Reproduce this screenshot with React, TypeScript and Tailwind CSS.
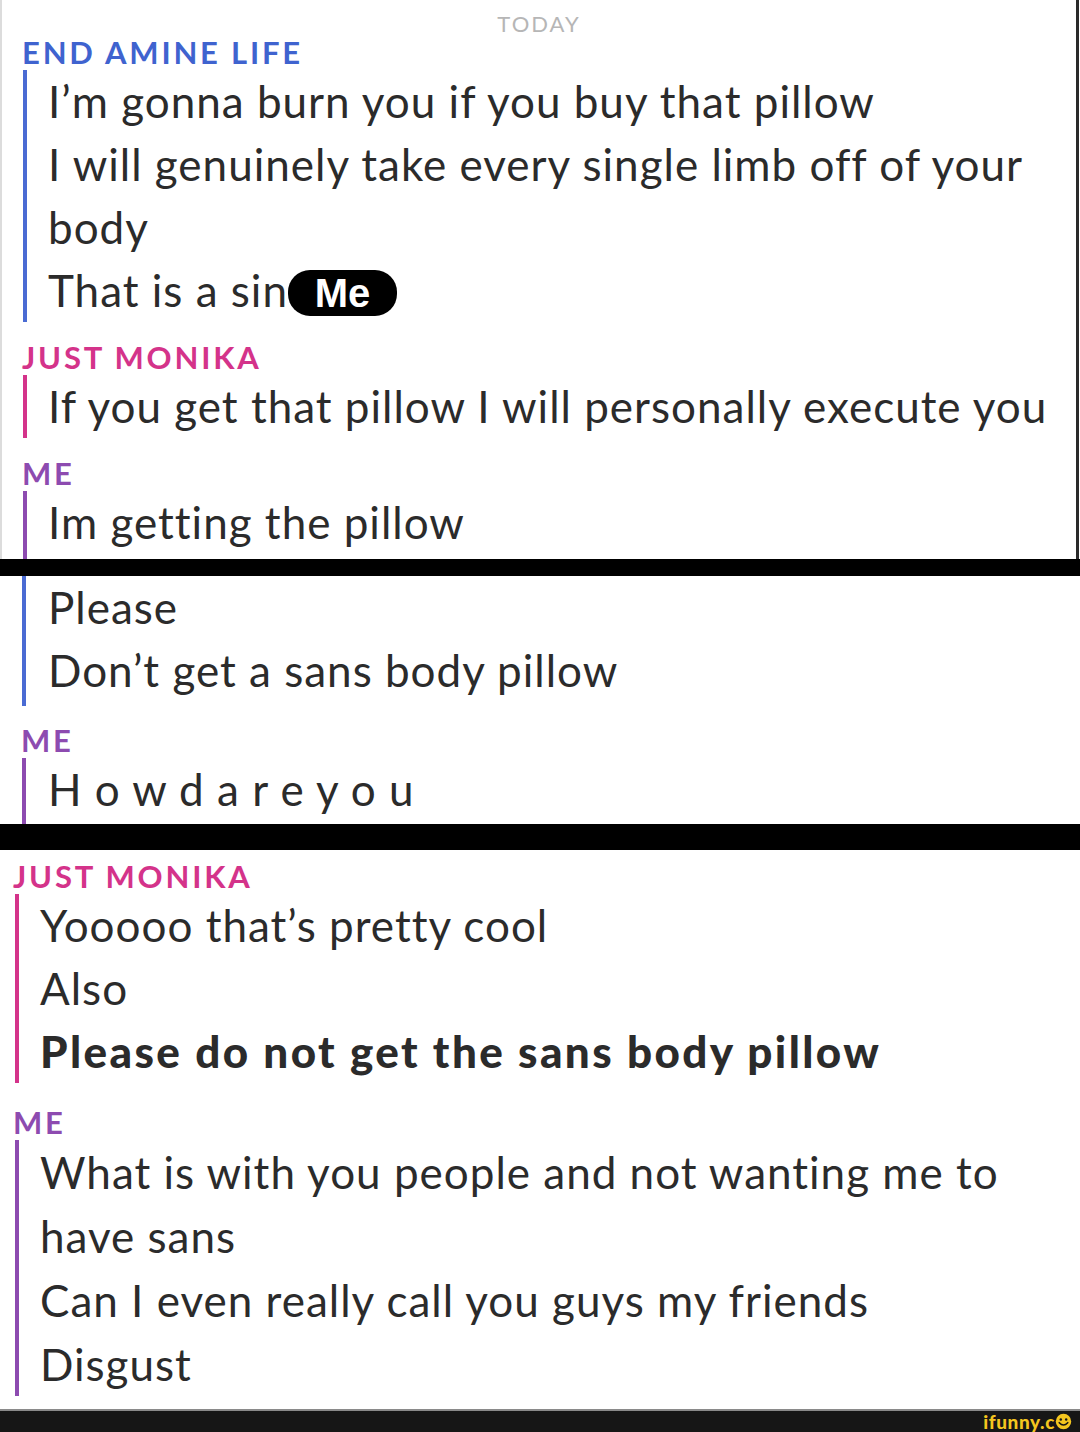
const font = { fontFamily: "Lato, 'Noto Sans', sans-serif" };

function Label({ color, children, className = "" }: { color: string; children: React.ReactNode; className?: string }) {
  return (
    <div className={`h-[32px] leading-[32px] text-[31px] font-bold tracking-[2.8px] ${color} ${className}`}>
      {children}
    </div>
  );
}

function Lines({ lines, bar, className = "", lh = "leading-[63px]" }: { lines: React.ReactNode[]; bar: string; className?: string; lh?: string }) {
  return (
    <div className={`border-l-[4px] ${bar} ${className}`}>
      {lines.map((l, i) => (
        <div key={i} className={`${lh} text-[44px] tracking-[1px] text-[#2b2b2b] whitespace-nowrap`}>
          {l}
        </div>
      ))}
    </div>
  );
}

function MeBadge() {
  return (
    <span
      className="inline-flex items-center justify-center align-middle h-[46px] w-[109px] -mt-[6px] rounded-[22px] bg-black text-white text-[40px] font-black tracking-[0px] leading-none"
      style={{ fontFamily: "'Liberation Sans', Arial, sans-serif" }}
    >
      Me
    </span>
  );
}

function IfunnyLogo() {
  return (
    <div className="flex items-center h-full pr-[8px] text-[#f4c61f] font-black text-[19px] leading-[20px] tracking-[0.6px]" style={font}>
      <span>ifunny.c</span>
      <svg width="17" height="17" viewBox="0 0 22 22">
        <circle cx="11" cy="11" r="10" fill="#f4c61f" />
        <circle cx="7.5" cy="8.5" r="1.6" fill="#161616" />
        <circle cx="14.5" cy="8.5" r="1.6" fill="#161616" />
        <path d="M5.5 12.5 Q11 18.5 16.5 12.5" stroke="#161616" strokeWidth="2" fill="none" strokeLinecap="round" />
      </svg>
    </div>
  );
}

export default function App() {
  const blue = "border-[#4a6bd3]";
  const pink = "border-[#d4338a]";
  const purple = "border-[#8d4bb0]";

  return (
    <main className="w-[1080px] h-[1432px] bg-white overflow-hidden flex flex-col" style={font}>
      {/* first screenshot */}
      <section className="h-[559px] flex flex-col pl-[20px] border-l-[2px] border-l-[#dcdcdc] border-r-[3px] border-r-[#2a2a2a] w-[1079px]">
        <div className="h-[36px] pt-[10px] leading-[28px] text-center text-[22px] tracking-[2px] text-[#b6b6b6] pr-[20px]">
          TODAY
        </div>
        <Label color="text-[#3f63cf]">END AMINE LIFE</Label>
        <Lines
          bar={blue}
          className="mt-[2px] ml-[1px] pl-[21px]"
          lines={[
            "I’m gonna burn you if you buy that pillow",
            "I will genuinely take every single limb off of your",
            "body",
            <span>
              That is a sin
              <MeBadge />
            </span>,
          ]}
        />
        <Label color="text-[#d4338a]" className="mt-[19px]">JUST MONIKA</Label>
        <Lines bar={pink} className="mt-[2px] ml-[1px] pl-[21px]" lines={["If you get that pillow I will personally execute you"]} />
        <Label color="text-[#8d4bb0]" className="mt-[19px]">ME</Label>
        <Lines bar={purple} className="mt-[2px] ml-[1px] pl-[21px] flex-1" lines={["Im getting the pillow"]} />
      </section>

      <div className="h-[17px] bg-black" />

      {/* second screenshot */}
      <section className="h-[248px] flex flex-col pl-[22px]">
        <Lines bar={blue} className="pl-[22px] pb-[4px]" lines={["Please", "Don’t get a sans body pillow"]} />
        <Label color="text-[#8d4bb0]" className="mt-[18px] -ml-[1px]">ME</Label>
        <Lines
          bar={purple}
          className="mt-[2px] pl-[22px] flex-1"
          lines={[<span className="tracking-[1px]">H o w d a r e y o u</span>]}
        />
      </section>

      <div className="h-[26px] bg-black" />

      {/* third screenshot */}
      <section className="h-[559px] flex flex-col pl-[13px] pt-[10px]">
        <Label color="text-[#d4338a]">JUST MONIKA</Label>
        <Lines
          bar={pink}
          className="mt-[2px] ml-[2px] pl-[21px]"
          lines={[
            "Yooooo that’s pretty cool",
            "Also",
            <span className="font-black tracking-[2.4px]">Please do not get the sans body pillow</span>,
          ]}
        />
        <Label color="text-[#8d4bb0]" className="mt-[23px]">ME</Label>
        <Lines
          bar={purple}
          className="mt-[2px] ml-[2px] pl-[21px]"
          lh="leading-[64px]"
          lines={["What is with you people and not wanting me to", "have sans", "Can I even really call you guys my friends", "Disgust"]}
        />
      </section>

      <div className="h-[23px] bg-[#161616] border-t-[2px] border-[#8a8a8a] flex justify-end overflow-hidden">
        <IfunnyLogo />
      </div>
    </main>
  );
}
